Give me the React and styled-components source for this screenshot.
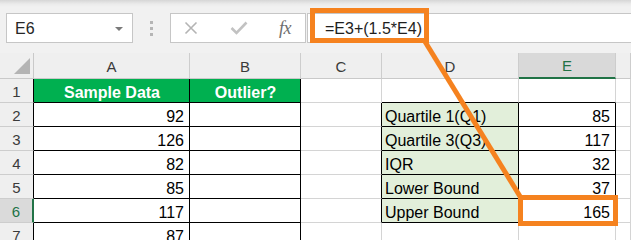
import React from "react";
import styled, { createGlobalStyle, css } from "styled-components";

const Global = createGlobalStyle`
  html, body { margin: 0; padding: 0; background: #ffffff; overflow: hidden; }
  body { font-family: "Liberation Sans", Arial, sans-serif; }
`;

const ORANGE = "#f5821f";
const GREEN = "#217346";
const GRID = "#d4d4d4";

const Page = styled.div`
  position: relative;
  width: 631px;
  height: 240px;
  overflow: hidden;
  background: #ffffff;
`;

const Toolbar = styled.div`
  height: 53px;
  box-sizing: border-box;
  display: flex;
  align-items: flex-start;
  padding: 13px 0 0 6px;
  background: linear-gradient(#d6d6d6 0px, #ebebeb 4px, #f1f1f1 7px);
`;

const Field = styled.div`
  box-sizing: border-box;
  height: 30px;
  background: #ffffff;
  border: 1px solid #c6c6c6;
  display: flex;
  align-items: center;
  font-size: 16px;
  color: #262626;
`;

const NameBox = styled(Field)`
  width: 127px;
  padding: 1px 0 0 8px;
  justify-content: space-between;
`;

const Caret = styled.span`
  width: 0;
  height: 0;
  margin-right: 9px;
  border-left: 4px solid transparent;
  border-right: 4px solid transparent;
  border-top: 4px solid #7a7a7a;
`;

const Splitter = styled.div`
  width: 37px;
  height: 30px;
  display: flex;
  flex-direction: column;
  align-items: center;
  justify-content: center;
  gap: 3px;
  padding-right: 1px;
  box-sizing: border-box;
`;

const Dot = styled.span`
  width: 3px;
  height: 3px;
  background: #b5b5b5;
`;

const FxBox = styled(Field)`
  width: 136px;
  padding: 0 14px 0 13px;
  justify-content: space-between;
`;

const Fx = styled.span`
  font-family: "Liberation Serif", "Times New Roman", serif;
  font-style: italic;
  font-size: 18px;
  color: #6e6e6e;
  letter-spacing: -0.5px;
  padding-top: 1px;
`;

const FormulaInput = styled(Field)`
  flex: 1;
  margin-left: 1px;
  border-right: none;
  padding: 2px 0 0 17px;
  color: #1e1e1e;
`;

const Sheet = styled.div`
  display: grid;
  grid-template-columns: 34px 156px 111px 81px 137px 97px 1fr;
  grid-template-rows: 26px repeat(7, 24px);
`;

const headBase = css`
  box-sizing: border-box;
  background: #efefef;
  color: #3a3a3a;
  font-size: 15px;
  display: flex;
  align-items: center;
  justify-content: center;
`;

const Corner = styled.div`
  ${headBase};
  border-right: 1px solid #c9c9c9;
  border-bottom: 1px solid #c9c9c9;
  align-items: flex-end;
  justify-content: flex-end;
  padding: 0 3px 4px 0;
`;

const ColHead = styled.div`
  ${headBase};
  padding-top: 1px;
  border-right: 1px solid #cdcdcd;
  border-bottom: 1px solid #c9c9c9;
  ${(p) =>
    p.$selected &&
    css`
      background: #d9d9d9;
      color: ${GREEN};
      border-bottom: 2px solid ${GREEN};
    `}
`;

const RowHead = styled.div`
  ${headBase};
  padding-top: 1px;
  border-bottom: 1px solid #cdcdcd;
  border-right: 1px solid ${(p) => p.$edge || "#c9c9c9"};
  ${(p) =>
    p.$selected &&
    css`
      background: #dadada;
      color: ${GREEN};
      border-right: 2px solid ${GREEN};
    `}
`;

const Cell = styled.div`
  box-sizing: border-box;
  display: flex;
  align-items: flex-end;
  justify-content: ${(p) =>
    p.$align === "right" ? "flex-end" : p.$align === "center" ? "center" : "flex-start"};
  padding: 0 ${(p) => (p.$align === "right" ? "5px" : "2px")} 0 3px;
  line-height: 18px;
  font-size: 16px;
  white-space: nowrap;
  overflow: hidden;
  color: ${(p) => p.$color || "#000000"};
  font-weight: ${(p) => (p.$bold ? 700 : 400)};
  background: ${(p) => p.$fill || "#ffffff"};
  border-right: 1px solid ${(p) => p.$rb || GRID};
  border-bottom: 1px solid ${(p) => p.$bb || GRID};
`;

const Callout = styled.div`
  position: absolute;
  box-sizing: border-box;
  left: ${(p) => p.$x}px;
  top: ${(p) => p.$y}px;
  width: ${(p) => p.$w}px;
  height: ${(p) => p.$h}px;
  border: 5px solid ${ORANGE};
  pointer-events: none;
`;

const Overlay = styled.svg`
  position: absolute;
  left: 0;
  top: 0;
  pointer-events: none;
`;

const columns = ["A", "B", "C", "D", "E", "F"];

const data = {
  1: { A: "Sample Data", B: "Outlier?" },
  2: { A: "92", D: "Quartile 1(Q1)", E: "85" },
  3: { A: "126", D: "Quartile 3(Q3)", E: "117" },
  4: { A: "82", D: "IQR", E: "32" },
  5: { A: "85", D: "Lower Bound", E: "37" },
  6: { A: "117", D: "Upper Bound", E: "165" },
  7: { A: "87" },
};

function cellProps(row, col) {
  const p = {};
  const inLeft = (col === "A" || col === "B") && row >= 1 && row <= 7;
  const inRight = (col === "D" || col === "E") && row >= 2 && row <= 6;
  if (inLeft || inRight) {
    p.$rb = "#000";
    p.$bb = "#000";
  }
  if ((col === "D" || col === "E") && row === 1) p.$bb = "#000";
  if (col === "C" && row >= 2 && row <= 6) p.$rb = "#000";
  if (row === 1 && inLeft) {
    p.$fill = "#00b050";
    p.$color = "#ffffff";
    p.$bold = true;
    p.$align = "center";
  } else if (col === "D" && inRight) {
    p.$fill = "#e2efda";
    p.$align = "left";
  } else {
    p.$align = "right";
  }
  return p;
}

const XIcon = () => (
  <svg width="14" height="14" viewBox="0 0 14 14">
    <path d="M1.5 1.5 L12.5 12.5 M12.5 1.5 L1.5 12.5" stroke="#b4b4b4" strokeWidth="1.6" fill="none" />
  </svg>
);

const CheckIcon = () => (
  <svg width="18" height="14" viewBox="0 0 18 14">
    <path d="M1.5 7 L6.5 12 L16.5 1.5" stroke="#c2c2c2" strokeWidth="2.6" fill="none" />
  </svg>
);

const CornerTriangle = () => (
  <svg width="16" height="16" viewBox="0 0 16 16">
    <polygon points="16,0 16,16 0,16" fill="#b4b4b4" />
  </svg>
);

export default function App() {
  const rows = [1, 2, 3, 4, 5, 6, 7];
  return (
    <Page>
      <Global />
      <Toolbar>
        <NameBox>
          <span>E6</span>
          <Caret />
        </NameBox>
        <Splitter>
          <Dot />
          <Dot />
          <Dot />
        </Splitter>
        <FxBox>
          <XIcon />
          <CheckIcon />
          <Fx>fx</Fx>
        </FxBox>
        <FormulaInput>=E3+(1.5*E4)</FormulaInput>
      </Toolbar>
      <Sheet>
        <Corner>
          <CornerTriangle />
        </Corner>
        {columns.map((c) => (
          <ColHead key={c} $selected={c === "E"}>
            {c === "F" ? "" : c}
          </ColHead>
        ))}
        {rows.map((r) => (
          <React.Fragment key={r}>
            <RowHead $selected={r === 6} $edge="#000">
              {r}
            </RowHead>
            {columns.map((c) => (
              <Cell key={c} {...cellProps(r, c)}>
                {(data[r] && data[r][c]) || ""}
              </Cell>
            ))}
          </React.Fragment>
        ))}
      </Sheet>
      <Overlay width="631" height="240" viewBox="0 0 631 240">
        <line x1="424" y1="40" x2="521" y2="198" stroke={ORANGE} strokeWidth="5" />
      </Overlay>
      <Callout $x={310} $y={8} $w={119} $h={35} />
      <Callout $x={518} $y={195} $w={100} $h={31} />
    </Page>
  );
}
